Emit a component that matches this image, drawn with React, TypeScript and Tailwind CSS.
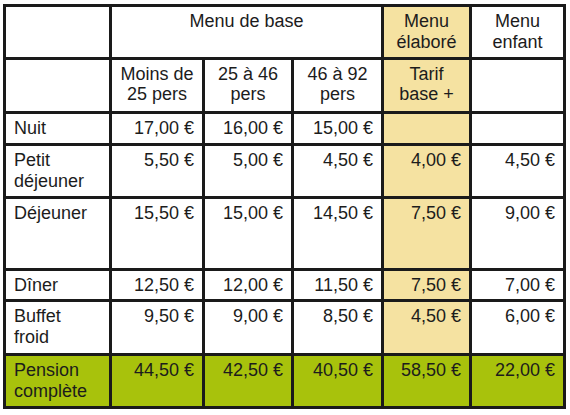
const YELLOW = "bg-[#f5e2a1]";

type Row = { label: string; values: string[]; green?: boolean };

const ROWS: Row[] = [
  { label: "Nuit", values: ["17,00 €", "16,00 €", "15,00 €", "", ""] },
  { label: "Petit déjeuner", values: ["5,50 €", "5,00 €", "4,50 €", "4,00 €", "4,50 €"] },
  { label: "Déjeuner", values: ["15,50 €", "15,00 €", "14,50 €", "7,50 €", "9,00 €"] },
  { label: "Dîner", values: ["12,50 €", "12,00 €", "11,50 €", "7,50 €", "7,00 €"] },
  { label: "Buffet froid", values: ["9,50 €", "9,00 €", "8,50 €", "4,50 €", "6,00 €"] },
  { label: "Pension complète", values: ["44,50 €", "42,50 €", "40,50 €", "58,50 €", "22,00 €"], green: true },
];

export default function App() {
  return (
    <div className="min-h-[415px] bg-white pl-[3px] pt-[4px] font-[family-name:Liberation_Sans,Arial,sans-serif] text-[18px] leading-[21px] text-[#1c1c1c]">
      <div className="grid w-[563px] grid-cols-[103px_90px_86px_87px_85px_91px] grid-rows-[50px_51px_29px_50px_69px_28px_51px_50px] gap-[3px] bg-[#1a1a1a] p-[3px]">
        {/* header */}
        <div className="bg-white" />
        <div className="col-span-3 bg-white pt-[4px] text-center">Menu de base</div>
        <div className={`${YELLOW} pt-[4px] text-center`}>
          Menu
          <br />
          élaboré
        </div>
        <div className="bg-white pt-[4px] text-center">
          Menu
          <br />
          enfant
        </div>

        <div className="bg-white" />
        <div className="bg-white pt-[4px] text-center leading-[20px]">
          Moins de
          <br />
          25 pers
        </div>
        <div className="bg-white pt-[4px] text-center leading-[20px]">
          25 à 46
          <br />
          pers
        </div>
        <div className="bg-white pt-[4px] text-center leading-[20px]">
          46 à 92
          <br />
          pers
        </div>
        <div className={`${YELLOW} pt-[4px] text-center leading-[20px]`}>
          Tarif
          <br />
          base +
        </div>
        <div className="bg-white" />

        {ROWS.map((r) => {
          const base = r.green ? "bg-[#a8c20c]" : "bg-white";
          return [
            <div key={r.label} className={`${base} pl-[8px] pr-[16px] pt-[4px]`}>
              {r.label}
            </div>,
            ...r.values.map((v, i) => (
              <div
                key={r.label + i}
                className={`${r.green ? base : i === 3 ? YELLOW : base} pr-[8px] pt-[4px] text-right whitespace-nowrap`}
              >
                {v}
              </div>
            )),
          ];
        })}
      </div>
    </div>
  );
}
